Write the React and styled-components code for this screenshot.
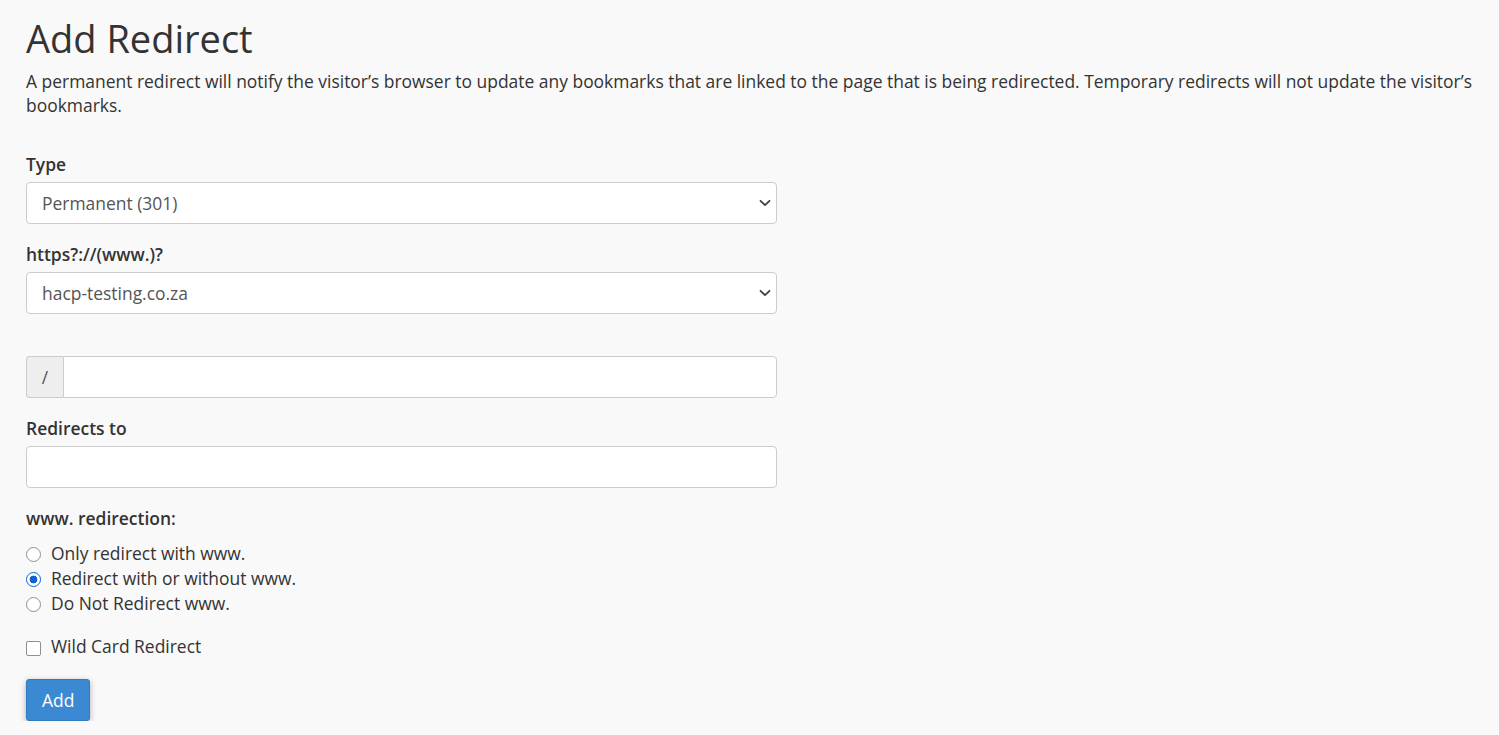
import styled, { createGlobalStyle } from 'styled-components';

const GlobalStyle = createGlobalStyle`
  html, body {
    margin: 0;
    padding: 0;
    background: #f9f9f9;
  }
  body {
    font-family: "Open Sans", "Liberation Sans", sans-serif;
    color: #333;
    font-size: 17.45px;
    line-height: 24px;
  }
`;

function Chevron() {
  return (
    <svg width="12" height="8" viewBox="0 0 12 8" fill="none">
      <path d="M1.5 1.8L6 6.2l4.5-4.4" stroke="#444" strokeWidth="1.8" strokeLinecap="round" strokeLinejoin="round" />
    </svg>
  );
}

export default function App() {
  return (
    <>
      <GlobalStyle />
      <Page>
        <Title>Add Redirect</Title>
        <Intro>
          A permanent redirect will notify the visitor’s browser to update any bookmarks that are linked to the page that is being redirected. Temporary redirects will not update the visitor’s bookmarks.
        </Intro>

        <Form>
          <Group>
            <Label>Type</Label>
            <SelectWrap>
              <Select defaultValue="301">
                <option value="301">Permanent (301)</option>
                <option value="302">Temporary (302)</option>
              </Select>
              <Arrow><Chevron /></Arrow>
            </SelectWrap>
          </Group>

          <Group>
            <Label>https?://(www.)?</Label>
            <SelectWrap>
              <Select defaultValue="hacp">
                <option value="hacp">hacp-testing.co.za</option>
              </Select>
              <Arrow><Chevron /></Arrow>
            </SelectWrap>
          </Group>

          <Group>
            <Label $empty />
            <InputGroup>
              <Addon>/</Addon>
              <Input $joined type="text" />
            </InputGroup>
          </Group>

          <Group>
            <Label>Redirects to</Label>
            <Input type="text" />
          </Group>

          <Group>
            <Label>www. redirection:</Label>
            <RadioList>
              <Choice>
                <Radio type="radio" name="www" />
                Only redirect with www.
              </Choice>
              <Choice>
                <Radio type="radio" name="www" defaultChecked />
                Redirect with or without www.
              </Choice>
              <Choice>
                <Radio type="radio" name="www" />
                Do Not Redirect www.
              </Choice>
            </RadioList>
          </Group>

          <CheckGroup>
            <Choice>
              <Checkbox type="checkbox" />
              Wild Card Redirect
            </Choice>
          </CheckGroup>

          <Button type="button">Add</Button>
        </Form>
      </Page>
    </>
  );
}

const Page = styled.div`
  padding: 13px 26px 0;
`;

const Title = styled.h1`
  margin: 0;
  font-size: 38px;
  line-height: 50px;
  font-weight: 400;
  color: #333;
`;

const Intro = styled.p`
  margin: 6px 0 0;
  line-height: 24px;
`;

const Form = styled.form`
  margin-top: 35px;
  width: 751px;
`;

const Group = styled.div`
  margin-bottom: 18px;
`;

const CheckGroup = styled.div`
  margin-bottom: 20px;
`;

const Label = styled.label`
  display: block;
  font-weight: 600;
  line-height: 24px;
  margin-bottom: 6px;
  height: ${p => (p.$empty ? '18px' : 'auto')};
`;

const SelectWrap = styled.div`
  position: relative;
`;

const Select = styled.select`
  appearance: none;
  display: block;
  width: 100%;
  height: 42px;
  padding: 0 36px 0 15px;
  border: 1px solid #ccc;
  border-radius: 4px;
  background: #fff;
  color: #555;
  font-family: inherit;
  font-size: 17.45px;
`;

const Arrow = styled.span`
  position: absolute;
  right: 6px;
  top: 17px;
  display: flex;
  pointer-events: none;
`;

const InputGroup = styled.div`
  display: flex;
  height: 42px;
`;

const Addon = styled.span`
  display: flex;
  align-items: center;
  justify-content: center;
  width: 36px;
  background: #eee;
  border: 1px solid #ccc;
  border-right: none;
  border-radius: 4px 0 0 4px;
  color: #555;
`;

const Input = styled.input`
  display: block;
  box-sizing: border-box;
  flex: 1;
  width: 100%;
  height: 42px;
  padding: 0 12px;
  border: 1px solid #ccc;
  border-radius: ${p => (p.$joined ? '0 4px 4px 0' : '4px')};
  background: #fff;
  font-family: inherit;
  font-size: 17.45px;
`;

const RadioList = styled.div`
  display: flex;
  flex-direction: column;
  padding-top: 5px;
`;

const Choice = styled.label`
  display: flex;
  align-items: center;
  gap: 10px;
  line-height: 25px;
`;

const Radio = styled.input`
  appearance: none;
  box-sizing: border-box;
  margin: 1px 0 0;
  width: 15px;
  height: 15px;
  border: 1.5px solid #8f8f95;
  border-radius: 50%;
  background: #fff;
  &:checked {
    border-color: #0b63d8;
    background: radial-gradient(circle, #0b63d8 0 3.6px, #fff 4.2px);
  }
`;

const Checkbox = styled.input`
  appearance: none;
  box-sizing: border-box;
  margin: 3px 0 0;
  width: 15px;
  height: 15px;
  border: 1.5px solid #8f8f95;
  border-radius: 2px;
  background: #fff;
`;

const Button = styled.button`
  display: block;
  height: 42px;
  padding: 0 15px;
  border: 1px solid #2e7bc4;
  border-radius: 3px;
  background: #3b89d3;
  color: #fff;
  font-family: inherit;
  font-size: 17.45px;
  box-shadow: 0 2px 6px rgba(0, 0, 0, 0.3);
`;
